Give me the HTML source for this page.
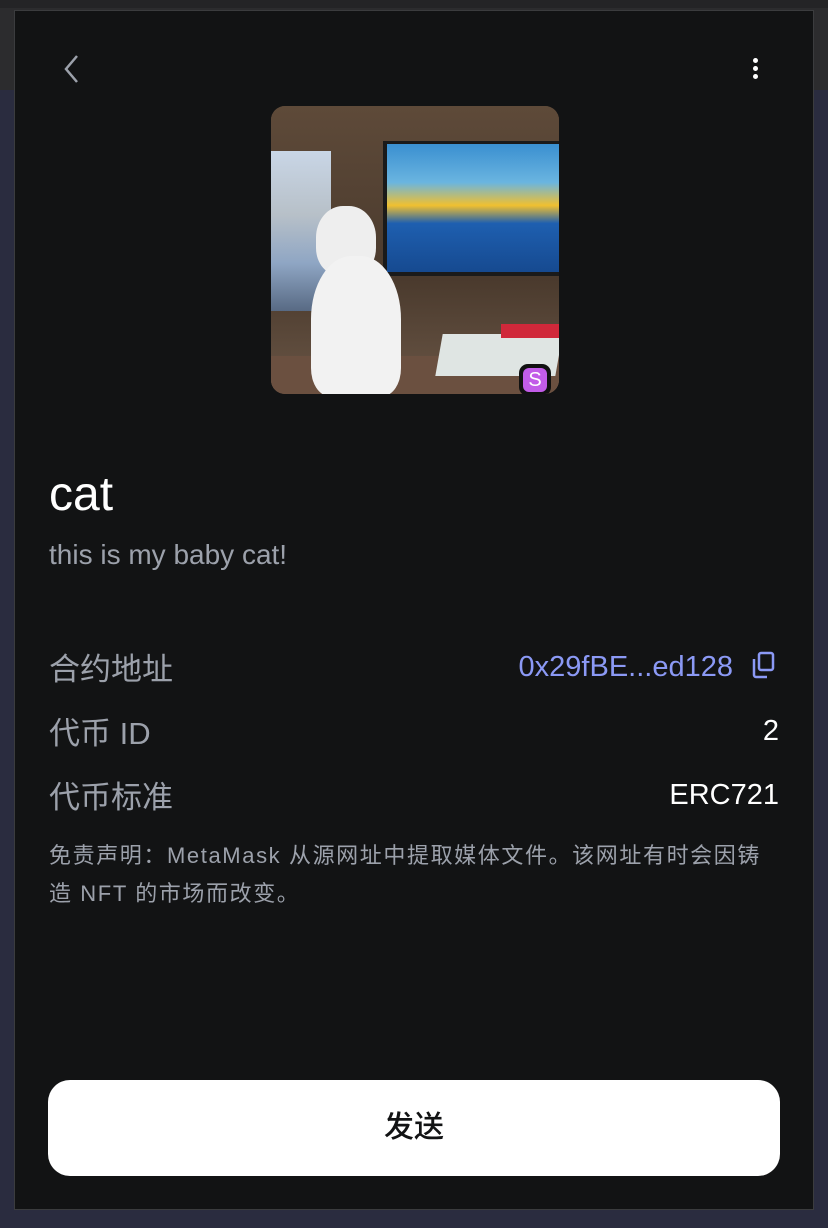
<!DOCTYPE html>
<html><head><meta charset="utf-8"><style>
*{margin:0;padding:0;box-sizing:border-box}
body{width:828px;height:1228px;background:#2a2c3f;position:relative;overflow:hidden;font-family:"Liberation Sans","Noto Sans CJK SC",sans-serif}
.topbar{position:absolute;left:0;top:0;width:828px;height:90px;background:#2c2c2e}
.topbar2{position:absolute;left:0;top:0;width:828px;height:8px;background:#242426}
.panel{position:absolute;left:14px;top:10px;width:800px;height:1200px;background:#121314;border:1.5px solid #3b3c3e}
.abs{position:absolute}
.img{left:256px;top:95px;width:288px;height:288px;border-radius:14px;overflow:hidden;background:#5b4636}
.lbl{color:#9ca1ab;font-size:31px}
.val{color:#fff;font-size:29px;right:34px;text-align:right}
</style></head><body>
<div class="topbar"></div><div class="topbar2"></div>
<div class="panel">
<svg class="abs" style="left:46px;top:42px" width="20" height="32" viewBox="0 0 20 32"><path d="M16 3 L5 16 L16 29" stroke="#9ca1ab" stroke-width="2.5" fill="none"/></svg>
<div class="abs" style="left:738px;top:47px;width:5px;height:5px;border-radius:50%;background:#fff;box-shadow:0 8px 0 #fff,0 16px 0 #fff"></div>
<div class="abs img">
 <div class="abs" style="left:0;top:0;width:288px;height:288px;background:linear-gradient(180deg,#5e4a39,#4a3a2d 60%,#6a5646)"></div>
 <div class="abs" style="left:0;top:45px;width:60px;height:160px;background:linear-gradient(180deg,#c9d6e6,#b7c0c8 40%,#8fa6c4 70%,#586a84)"></div>
 <div class="abs" style="left:112px;top:35px;width:176px;height:135px;background:#1a1a1a"></div>
 <div class="abs" style="left:116px;top:38px;width:172px;height:128px;background:linear-gradient(180deg,#3a8fd0 0%,#6ab5e0 30%,#f0c030 48%,#1e5fb0 62%,#164a90 100%)"></div>
 <div class="abs" style="left:0;top:250px;width:288px;height:38px;background:#6b5040"></div>
 <div class="abs" style="left:168px;top:228px;width:120px;height:42px;background:#dfe5e3;transform:skewX(-10deg)"></div>
 <div class="abs" style="left:230px;top:218px;width:58px;height:14px;background:#d0283a"></div>
 <div class="abs" style="left:45px;top:100px;width:60px;height:70px;border-radius:45% 45% 40% 40%;background:#eeeeee"></div>
 <div class="abs" style="left:40px;top:150px;width:90px;height:140px;border-radius:45% 45% 20% 20%;background:#f2f2f2"></div>
 <div class="abs" style="left:248px;top:258px;width:32px;height:32px;border-radius:9px;background:#111;padding:4px"><div style="width:24px;height:24px;border-radius:6px;background:#c25ce8;color:#fff;font-size:20px;line-height:24px;text-align:center">S</div></div>
</div>
<div class="abs" style="left:34px;top:456px;color:#fff;font-size:48px;font-weight:500">cat</div>
<div class="abs" style="left:34px;top:528px;color:#9ca1ab;font-size:28px">this is my baby cat!</div>
<div class="abs lbl" style="left:34px;top:633px">合约地址</div>
<div class="abs" style="right:80px;top:640px;color:#8b99f5;font-size:29px">0x29fBE...ed128</div>
<svg class="abs" style="left:736px;top:640px" width="26" height="28" viewBox="0 0 26 28"><rect x="8" y="2" width="14" height="17" rx="2" stroke="#8b99f5" stroke-width="2.5" fill="none"/><path d="M3 8 V24 a2 2 0 0 0 2 2 H16" stroke="#8b99f5" stroke-width="2.5" fill="none"/></svg>
<div class="abs lbl" style="left:34px;top:697px">代币 ID</div>
<div class="abs val" style="top:704px">2</div>
<div class="abs lbl" style="left:34px;top:761px">代币标准</div>
<div class="abs val" style="top:768px">ERC721</div>
<div class="abs" style="left:34px;top:826px;width:760px;color:#9ca1ab;font-size:22px;line-height:38px;letter-spacing:1.6px">免责声明：MetaMask 从源网址中提取媒体文件。该网址有时会因铸<br>造 NFT 的市场而改变。</div>
<div class="abs" style="left:33px;top:1069px;width:732px;height:96px;border-radius:22px;background:#fff;color:#121314;font-size:30px;line-height:96px;text-align:center;font-weight:500">发送</div>
</div>
</body></html>
